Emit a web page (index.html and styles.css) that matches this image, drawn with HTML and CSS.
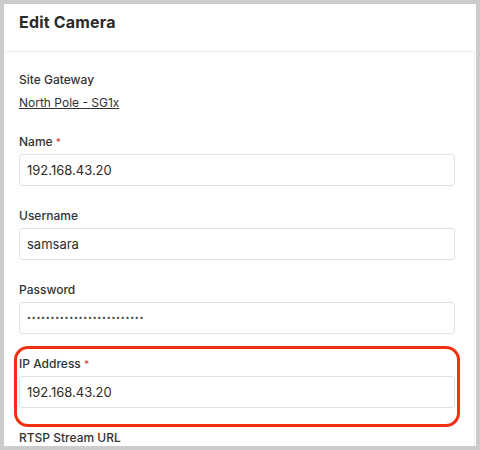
FILE: index.html
```html
<!DOCTYPE html>
<html lang="en">
<head>
    <meta charset="UTF-8">
    <meta name="viewport" content="width=device-width, initial-scale=1.0">
    <title>Edit Camera</title>
    <link rel="stylesheet" href="styles.css">
</head>
<body>
    <div class="panel">
        <div class="panel-header">Edit Camera</div>
        <div class="panel-body">
            <div class="info">
                <div class="field-label">Site Gateway</div>
                <a class="info-link" href="#">North Pole - SG1x</a>
            </div>

            <div class="field">
                <div class="field-label">Name <span class="req">*</span></div>
                <div class="field-input">192.168.43.20</div>
            </div>

            <div class="field">
                <div class="field-label">Username</div>
                <div class="field-input">samsara</div>
            </div>

            <div class="field">
                <div class="field-label">Password</div>
                <div class="field-input"><span class="dots">•••••••••••••••••••••••••</span></div>
            </div>

            <div class="field highlighted">
                <div class="field-label">IP Address <span class="req">*</span></div>
                <div class="field-input">192.168.43.20</div>
                <div class="highlight-ring"></div>
            </div>

            <div class="field">
                <div class="field-label">RTSP Stream URL</div>
            </div>
        </div>
    </div>
</body>
</html>
```

FILE: styles.css
```css
body {
    margin: 0;
    padding: 4px;
    background-color: #cccccc;
    font-family: Inter, "Liberation Sans", sans-serif;
    color: #333;
}
.panel {
    background-color: white;
    height: 442px;
    overflow: hidden;
}
.panel-header {
    padding: 10px 15px 21px;
    font-size: 16px;
    line-height: 16px;
    font-weight: 700;
    letter-spacing: 0.2px;
    color: #2b2b2b;
}
.panel-body {
    border-top: 1px solid #eeeeee;
    border-right: 1px solid #eeeeee;
    margin-right: 1px;
    padding: 20px 19px 0 15px;
    height: 400px;
}
.info {
    margin-bottom: 23px;
}
.field-label {
    font-size: 12px;
    line-height: 16px;
    font-weight: 500;
    color: #333;
}
.info-link {
    display: block;
    margin-top: 7px;
    font-size: 12px;
    line-height: 16px;
    color: #333;
    text-decoration: underline;
}
.req {
    color: #e0434b;
    font-size: 10px;
    vertical-align: top;
}
.field {
    position: relative;
    margin-bottom: 22px;
}
.field-input {
    margin-top: 4px;
    height: 30px;
    border: 1px solid #dde1ea;
    border-radius: 3px;
    padding: 0 7px;
    font-size: 13px;
    line-height: 30px;
    color: #2b2b2b;
}
.dots {
    font-size: 7px;
    letter-spacing: 0.75px;
    color: #444;
    vertical-align: top;
}
.highlight-ring {
    position: absolute;
    top: -10px;
    left: -5px;
    right: -5px;
    bottom: -19px;
    border: 3px solid #f2300f;
    border-radius: 14px;
}
```
